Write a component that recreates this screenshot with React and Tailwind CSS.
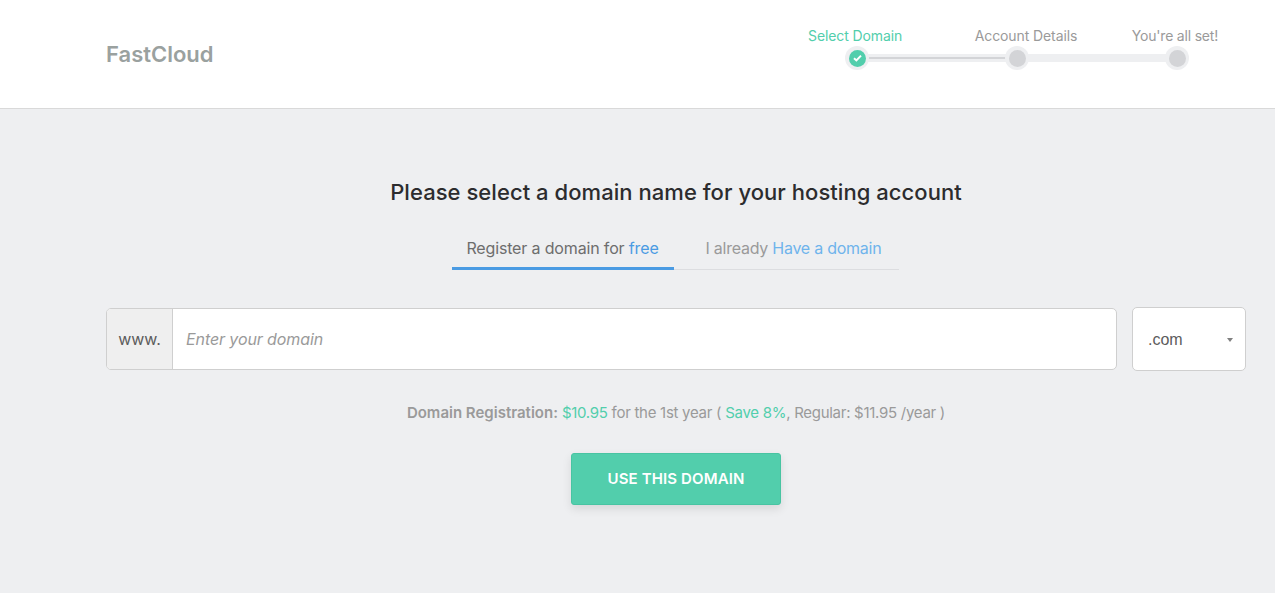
const Step = ({ done }) => (
  <div className="z-10 flex h-6 w-6 items-center justify-center rounded-full bg-[#eeeff1]">
    <div className={`flex h-[17px] w-[17px] items-center justify-center rounded-full ${done ? 'bg-[#52ceac]' : 'bg-[#d3d4d7]'}`}>
      {done && (
        <svg width="9" height="8" viewBox="0 0 9 8" fill="none">
          <path d="M1 4.2 L3.4 6.4 L8 1.6" stroke="#fff" strokeWidth="2" />
        </svg>
      )}
    </div>
  </div>
)

const App = () => {
  return (
    <div className="min-h-[593px] bg-[#eeeff1] font-['Inter',sans-serif] text-[#9a9a9a]">
      <header className="flex h-[109px] items-start justify-between border-b border-[#d9d9d9] bg-white pl-[106px] pr-[57px]">
        <div className="mt-[40px] text-[22px] leading-[28px] font-semibold text-[#9aa19f]">FastCloud</div>
        <div className="mt-[27px] flex w-[410px] flex-col">
          <div className="flex h-[17px] items-center justify-between text-[14px] leading-[17px] tracking-[-0.1px]">
            <span className="text-[#52ceac]">Select Domain</span>
            <span className="ml-[18px]">Account Details</span>
            <span className="tracking-[-0.2px]">You're all set!</span>
          </div>
          <div className="relative mt-[2px] ml-[37px] flex w-[344px] items-center justify-between">
            <div className="absolute top-[8px] right-[8px] left-[8px] h-2 bg-[#eeeff1]"></div>
            <div className="absolute top-[11px] left-[8px] h-0.5 w-[160px] bg-[#d3d4d7]"></div>
            <Step done />
            <Step />
            <Step />
          </div>
        </div>
      </header>

      <main className="flex flex-col items-center pr-[29px] pl-[106px]">
        <h1 className="mt-[69px] text-[22px] leading-[28px] font-medium tracking-[0.05px] text-[#2c2c2e]">
          Please select a domain name for your hosting account
        </h1>

        <div className="mt-[23px] -ml-[2px] flex w-[447px] border-b border-[#dcdde0] text-[16px] leading-[20px] tracking-[-0.15px]">
          <div className="-mb-px w-[222px] border-b-[3px] border-[#4a9be3] pt-[9px] pb-[9px] text-center text-[#6d6d6d]">
            Register a domain for <span className="text-[#4a9be3]">free</span>
          </div>
          <div className="pt-[9px] pb-[9px] pl-[32px] tracking-[-0.25px]">
            I already <span className="text-[#6fb4ec]">Have a domain</span>
          </div>
        </div>

        <div className="mt-[37px] flex w-full items-center">
          <div className="flex h-[62px] flex-1 overflow-hidden rounded-[5px] border border-[#cfcfcf] bg-white">
            <div className="flex w-[66px] items-center justify-center border-r border-[#cfcfcf] bg-[#efefef] text-[16px] text-[#5c5c5c]">
              www.
            </div>
            <input
              placeholder="Enter your domain"
              className="flex-1 pl-[13px] text-[16px] tracking-[-0.1px] italic outline-none placeholder:text-[#9a9a9a]"
            />
          </div>
          <div className="ml-[15px] flex h-[64px] w-[114px] items-center justify-between rounded-[5px] border border-[#cfcfcf] bg-white pt-[2px] pr-[12px] pl-[15px] font-['Liberation_Sans',sans-serif] text-[16px] text-[#5c5c5c]">
            <span>.com</span>
            <span className="h-0 w-0 border-x-[3.5px] border-t-[4px] border-x-transparent border-t-[#808080]"></span>
          </div>
        </div>

        <p className="mt-[32px] text-[15px] leading-[20px] tracking-[-0.28px]">
          <span className="font-semibold tracking-[0px]">Domain Registration:</span>{' '}
          <span className="text-[#52ceac]">$10.95</span> for the 1st year ({' '}
          <span className="text-[#52ceac]">Save 8%</span>, Regular: $11.95 /year )
        </p>

        <button className="mt-[30px] h-[52px] w-[210px] rounded-[3px] border border-[#48c4a2] bg-[#52ceac] text-[15px] font-semibold tracking-[0.13px] text-white shadow-[0_4px_10px_rgba(0,0,0,0.1)]">
          USE THIS DOMAIN
        </button>
      </main>
    </div>
  )
}

export default App
